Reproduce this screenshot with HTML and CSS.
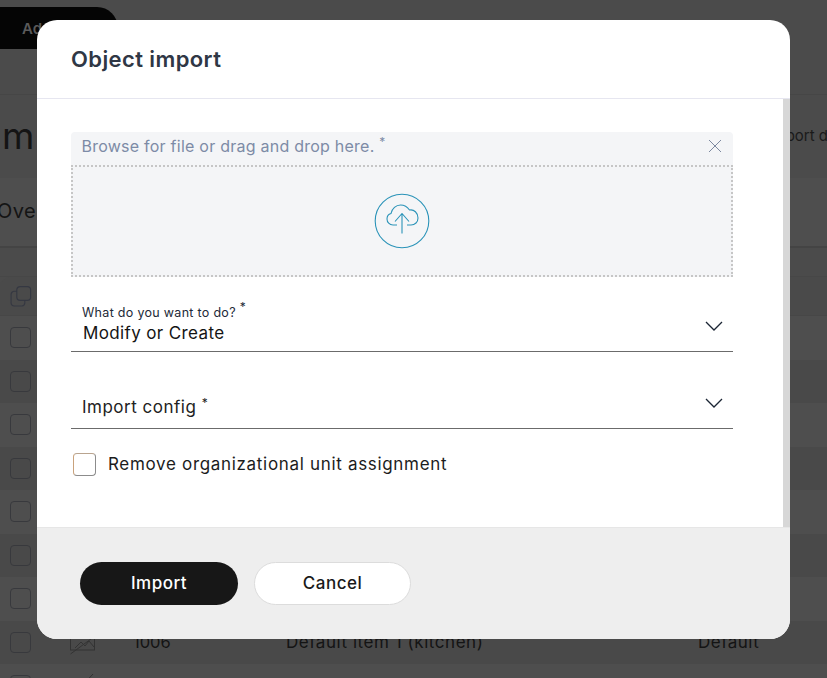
FILE: index.html
```html
<!DOCTYPE html>
<html lang="en">
<head>
<meta charset="utf-8">
<title>Object import</title>
<link rel="stylesheet" href="styles.css">
</head>
<body>
<div class="page">
  <header class="topbar"><button class="add-btn" type="button">Add</button></header>
  <section class="title-row"><h1 class="page-title">m</h1><span class="page-action">port d</span></section>
  <nav class="tabs"><span class="tab">Ove</span></nav>
  <div class="table">
    <div class="thead">
      <svg class="copy-icon" viewBox="0 0 22 22" fill="none" stroke="#353842" stroke-width="1.2"><rect x="6.6" y="0.6" width="14.5" height="14.5" rx="3.5"/><path d="M6.6 5.5H4A3.4 3.4 0 0 0 .6 9v8.5A3.4 3.4 0 0 0 4 21h8a3.4 3.4 0 0 0 3-3v-3"/></svg>
    </div>
    <div class="row"><span class="box"></span></div>
    <div class="row alt"><span class="box"></span></div>
    <div class="row"><span class="box"></span></div>
    <div class="row alt"><span class="box"></span></div>
    <div class="row"><span class="box"></span></div>
    <div class="row alt"><span class="box"></span></div>
    <div class="row"><span class="box"></span></div>
    <div class="row alt">
      <span class="box"></span>
      <svg class="thumb" viewBox="0 0 28 26" fill="none" stroke="#333" stroke-width="1"><rect x="1.5" y="1" width="24" height="20"/><path d="M1.5 25 26 7M6 19l6-6 4 4 4-5 5 6"/><circle cx="7" cy="6" r="2"/></svg>
      <span class="cell-id">1006</span><span class="cell-name">Default item 1 (kitchen)</span><span class="cell-type">Default</span>
    </div>
    <div class="row">
      <span class="box"></span>
      <svg class="thumb" viewBox="0 0 28 26" fill="none" stroke="#333" stroke-width="1"><path d="M1.5 25 24 1"/></svg>
      <span class="cell-id">1007</span><span class="cell-name">Default item 10 (bar)</span><span class="cell-type">Default</span>
    </div>
  </div>

  <div class="modal">
    <div class="modal-head"><h2 class="modal-title">Object import</h2></div>
    <div class="modal-main">
      <div class="modal-body">
        <div class="upload">
          <div class="upload-label">
            <span class="upload-text">Browse for file or drag and drop here. <sup class="req">*</sup></span>
            <svg class="close-icon" viewBox="0 0 14 14" fill="none" stroke="#7d89a0" stroke-width="1"><path d="M1 1l12 12M13 1 1 13"/></svg>
          </div>
          <div class="dropzone">
            <svg class="cloud-icon" viewBox="0 0 56 56" fill="none" stroke="#2a93b8" stroke-width="1.1"><circle cx="28" cy="28" r="26.8"/><path d="M23 32H19C15.5 32 13 29.300 13 26C13 23 15 21 17 20.500C18 15.500 22 12 26.500 12C30.500 12 33.500 14 35.500 17C40 16 44 20 44 25C44 29 41 32 37 32H33"/><path d="M28 40.500V20.500M21 28.500 28 20.500 35 28.500"/></svg>
          </div>
        </div>
        <div class="select first">
          <div class="select-text">
            <span class="select-small">What do you want to do? <sup class="req">*</sup></span>
            <span class="select-value">Modify or Create</span>
          </div>
          <svg class="chevron" viewBox="0 0 18 10" fill="none" stroke="#1b2534" stroke-width="1.3"><path d="M1 1l8 8 8-8"/></svg>
        </div>
        <div class="select second">
          <span class="select-placeholder">Import config <sup class="req">*</sup></span>
          <svg class="chevron" viewBox="0 0 18 10" fill="none" stroke="#1b2534" stroke-width="1.3"><path d="M1 1l8 8 8-8"/></svg>
        </div>
        <label class="check"><span class="check-box"></span><span class="check-text">Remove organizational unit assignment</span></label>
      </div>
      <div class="scrollbar"></div>
    </div>
    <div class="modal-foot">
      <button class="btn primary" type="button">Import</button>
      <button class="btn secondary" type="button">Cancel</button>
    </div>
  </div>
</div>
</body>
</html>
```

FILE: styles.css
```css
* { box-sizing: border-box; }
html, body { margin: 0; height: 100%; }
body { font-family: Inter, "Open Sans", sans-serif; color: #111; background: #4b4b4b; }
h1, h2 { margin: 0; font-weight: inherit; }
button { font-family: inherit; }

.page { position: relative; width: 827px; height: 678px; overflow: hidden; background: #4b4b4b; }

.topbar { height: 95px; padding-top: 7px; border-bottom: 1px solid #464646; }
.add-btn { display: block; width: 118px; height: 42px; padding: 0 0 0 22px; border: 0; border-radius: 0 21px 21px 0; background: #050505; color: #5a5a5a; font-size: 15px; font-weight: 600; text-align: left; }

.title-row { height: 83px; padding: 0 0 2px 2px; display: flex; justify-content: space-between; align-items: center; background: #4b4b4b; }
.page-title { font-size: 37px; line-height: 1; color: #141414; }
.page-action { font-size: 15px; margin-right: -1px; color: #1a1a1a; }

.tabs { height: 70px; padding-bottom: 3px; display: flex; align-items: center; background: #4e4e4e; border-bottom: 2px solid #444; }
.tab { margin-left: -3px; font-size: 20px; letter-spacing: 0.4px; color: #141414; }

.table { margin-top: 28px; border-top: 1px solid #474747; }
.thead { height: 39px; padding: 9px 0 0 10px; background: #4a4a4a; border-bottom: 1px solid #474747; border-top-left-radius: 10px; }
.copy-icon { display: block; width: 22px; height: 21px; }
.row { height: 43.5px; display: flex; align-items: center; padding-left: 10px; background: #4e4e4e; position: relative; }
.row.alt { background: #494949; }
.box { width: 21px; height: 21px; border: 1px solid #38393d; border-radius: 4px; flex: none; }
.thumb { width: 28px; height: 26px; margin-left: 38px; flex: none; }
.cell-id { margin-left: 36px; width: 153px; flex: none; font-size: 16.500px; color: #141414; }
.cell-name { width: 412px; flex: none; font-size: 17px; letter-spacing: 0.55px; color: #141414; }
.cell-type { font-size: 17px; letter-spacing: 0.5px; color: #141414; }

.modal { position: absolute; left: 37px; top: 20px; width: 753px; height: 619px; display: flex; flex-direction: column; background: #fff; border-radius: 20px; overflow: hidden; }
.modal-head { height: 79px; padding-left: 34px; display: flex; align-items: center; border-bottom: 1px solid #e6e6f0; flex: none; }
.modal-title { font-size: 22px; letter-spacing: 0.4px; font-weight: 600; color: #2f3745; }
.modal-main { flex: 1; display: flex; min-height: 0; }
.modal-body { flex: 1; padding: 33px 50px 0 34px; }
.scrollbar { width: 7px; flex: none; background: #d7d7d7; }

.upload { background: #f4f5f7; border-radius: 4px 4px 0 0; }
.upload-label { height: 33px; padding: 0 11px 6px 10.500px; display: flex; justify-content: space-between; align-items: center; }
.upload-text { font-size: 16px; letter-spacing: 0.24px; color: #7d8ba6; }
.close-icon { width: 14px; height: 14px; display: block; margin-top: 0; }
.req { font-size: 12px; line-height: 0; vertical-align: 6px; }
.dropzone { height: 112px; border: 2px dotted #c6c6c6; display: flex; align-items: center; justify-content: center; }
.cloud-icon { width: 56px; height: 56px; display: block; }

.select { display: flex; justify-content: space-between; align-items: center; border-bottom: 1px solid #6b6b6b; padding: 0 10px 0 11px; }
.select.first { height: 75px; padding-top: 24px; }
.select.second { height: 77px; padding-top: 34px; }
.select-text { display: flex; flex-direction: column; }
.select-small { font-size: 12.500px; line-height: 14px; letter-spacing: 0.3px; color: #222a38; }
.select-value { font-size: 17px; line-height: 26px; letter-spacing: 0.37px; padding-left: 1px; color: #141414; }
.select-placeholder { font-size: 17px; line-height: 24px; letter-spacing: 0.5px; color: #222; }
.chevron { width: 18px; height: 10px; display: block; }
.select.second .chevron { margin-bottom: 9px; }

.check { display: flex; align-items: center; gap: 12px; margin-top: 24px; padding-left: 2px; }
.check-box { width: 23px; height: 23px; border: 1px solid #8c8c8c; border-left-color: #c9a27c; border-top-color: #b9a48f; border-radius: 4px; flex: none; background: #fff; }
.check-text { font-size: 17px; letter-spacing: 0.68px; line-height: 20px; margin-bottom: 2px; color: #1c1c1c; }

.modal-foot { height: 112px; flex: none; padding: 34px 0 0 43px; display: flex; align-items: flex-start; gap: 16px; background: #eee; border-top: 1px solid #e6e6e6; }
.btn { height: 43px; border-radius: 22px; font-size: 17px; letter-spacing: 0.5px; font-weight: 500; padding-bottom: 2px; }
.btn.primary { width: 158px; border: 0; background: #171717; color: #fff; }
.btn.secondary { width: 157px; border: 1px solid #dcdcdc; background: #fff; color: #1a1a1a; }
```
